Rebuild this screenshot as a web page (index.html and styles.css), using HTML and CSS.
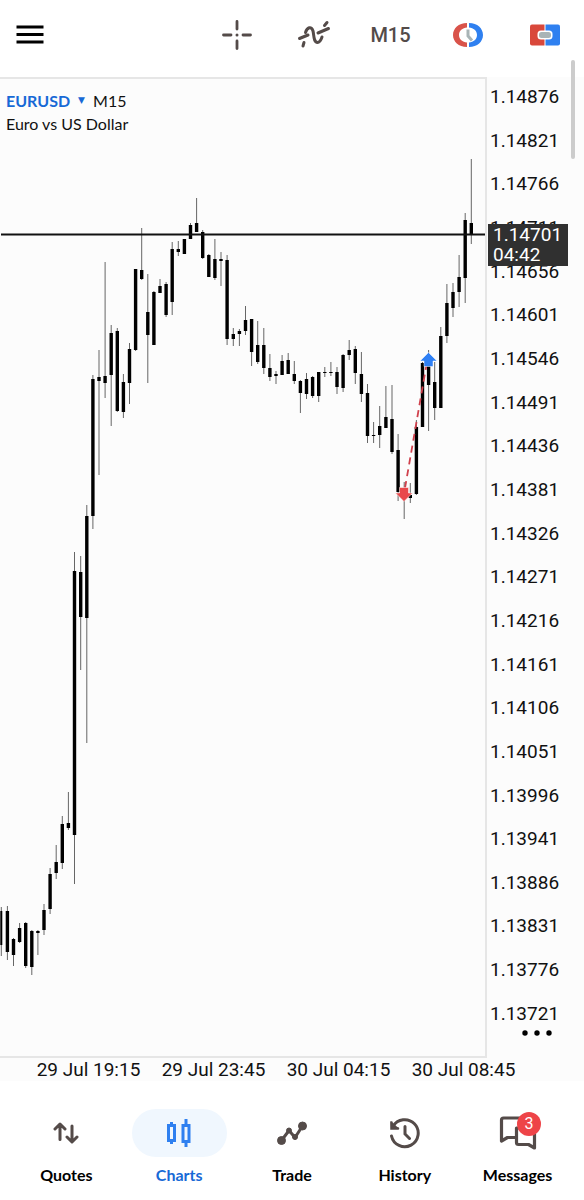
FILE: index.html
```html
<!DOCTYPE html>
<html lang="en">
  <head>
    <meta charset="UTF-8" />
    <meta name="viewport" content="width=device-width, initial-scale=1.0" />
    <link rel="stylesheet" href="styles.css">
    <title>EURUSD M15</title>
  </head>
  <body>
    <!-- top bar -->
    <header class="toolbar">
      <button class="menu-btn" aria-label="Menu">
        <svg width="28" height="20" viewBox="0 0 28 20">
          <path d="M0.5 2H27.500M0.5 9.500H27.500M0.5 17H27.500" stroke="#000" stroke-width="3" />
        </svg>
      </button>
      <div class="tools">
        <button class="tool-btn" aria-label="Crosshair">
          <svg width="32" height="32" viewBox="0 0 32 32" stroke="#544b49" stroke-width="2.800" stroke-linecap="round">
            <path d="M16 2.500V10M16 22V29.500M2.500 16H10M22 16H29.500" />
            <circle cx="16" cy="16" r="1.500" fill="#544b49" stroke="none" />
          </svg>
        </button>
        <button class="tool-btn" aria-label="Indicators">
          <svg width="34" height="30" viewBox="0 0 34 30" fill="none" stroke="#544b49" stroke-width="3" stroke-linecap="round">
            <path d="M2.500 18.500L11 15M8.500 12.500C10 7.500 14.500 5.500 16 11C17 15 16.500 22.500 20.500 22.500C23 22.500 24 20 25 17M21 13L31.500 8.500M27.500 5.500L30 2.500M6 26L7 22.500" />
          </svg>
        </button>
        <button class="tool-btn">M15</button>
        <button class="tool-btn" aria-label="One click trading">
          <svg width="32" height="28" viewBox="0 0 32 28" fill="none">
            <path d="M15 2C6.500 2 1 7.500 1 14S6.500 26 15 26V21.500C10.500 21 7 18.500 7 14S10.500 7 15 6.500Z" fill="#d9534a" />
            <path d="M17 2C25.500 2 31 7.500 31 14S25.500 26 17 26V21.500C21.500 21 25 18.500 25 14S21.500 7 17 6.500Z" fill="#2f80f0" />
            <path d="M16 8.500V15L20 19.500" stroke="#a9b4b6" stroke-width="3" />
          </svg>
        </button>
        <button class="tool-btn" aria-label="New order">
          <svg width="30" height="22" viewBox="0 0 30 22">
            <path d="M2 0.500H14.500V21.500H2Q0 21.500 0 19.500V2.500Q0 0.500 2 0.500Z" fill="#d9483b" />
            <path d="M15.500 0.500H28Q30 0.500 30 2.500V19.500Q30 21.500 28 21.500H15.500Z" fill="#2f80f0" />
            <rect x="7.500" y="6.500" width="15" height="9" rx="3.500" fill="#fff" />
            <rect x="9" y="8" width="12" height="6" rx="2.500" fill="#a9b4b6" />
          </svg>
        </button>
      </div>
    </header>

    <!-- chart -->
    <main class="chart">
      <div class="plot">
        <div class="plot-title">
          <div class="symbol-row">
            <button class="symbol-btn">EURUSD <span class="arrow">▼</span></button>
            <span>M15</span>
          </div>
          <div>Euro vs US Dollar</div>
        </div>
        <svg class="candles" viewBox="0 79 485 977">
          <g id="candles"></g>
          <path d="M1 234.500H485" stroke="#111" stroke-width="2" />
          <path d="M405 488L428 356" stroke="#d0404c" stroke-width="1.800" stroke-dasharray="7 5" />
          <path d="M428.500 352.500L437 361H433V366.500H424V361H420Z" fill="#2f80f5" stroke="#fff" stroke-width="0.500" />
          <path d="M404 501.500L412.500 493H408.500V487.500H399.500V493H395.500Z" fill="#e8484b" stroke="#fff" stroke-width="0.500" />
        </svg>
      </div>
      <div class="price-axis">
        <span>1.14876</span>
        <span>1.14821</span>
        <span>1.14766</span>
        <span>1.14711</span>
        <span>1.14656</span>
        <span>1.14601</span>
        <span>1.14546</span>
        <span>1.14491</span>
        <span>1.14436</span>
        <span>1.14381</span>
        <span>1.14326</span>
        <span>1.14271</span>
        <span>1.14216</span>
        <span>1.14161</span>
        <span>1.14106</span>
        <span>1.14051</span>
        <span>1.13996</span>
        <span>1.13941</span>
        <span>1.13886</span>
        <span>1.13831</span>
        <span>1.13776</span>
        <span>1.13721</span>
        <button class="more-btn" aria-label="More">
          <svg width="30" height="6" viewBox="0 0 30 6">
            <circle cx="3" cy="3" r="2.700" />
            <circle cx="15" cy="3" r="2.700" />
            <circle cx="27" cy="3" r="2.700" />
          </svg>
        </button>
        <div class="current-price">
          <div>1.14701</div>
          <div>04:42</div>
        </div>
      </div>
      <div class="time-axis">
        <span>29 Jul 19:15</span>
        <span>29 Jul 23:45</span>
        <span>30 Jul 04:15</span>
        <span>30 Jul 08:45</span>
      </div>
    </main>
    <div class="scroll-thumb"></div>

    <!-- bottom tabs -->
    <nav class="tabs">
      <a class="tab" href="#quotes">
        <span class="tab-icon">
          <svg width="26" height="24" viewBox="0 0 26 24" fill="none" stroke="#544b49" stroke-width="3" stroke-linecap="round" stroke-linejoin="round">
            <path d="M7 18.500V3.500M2 8L7 3L12 8M19 5V20M14 16L19 21L24 16" />
          </svg>
        </span>
        Quotes
      </a>
      <a class="tab active" href="#charts">
        <span class="tab-icon">
          <svg width="26" height="30" viewBox="0 0 26 30" fill="none" stroke="#2f80f0" stroke-width="3">
            <path d="M2.500 7.500H8.500V22.500H2.500ZM5.500 4V7M5.500 23V26M17 7.500H23V23.500H17ZM20 1V7M20 24V29" />
          </svg>
        </span>
        Charts
      </a>
      <a class="tab" href="#trade">
        <span class="tab-icon">
          <svg width="30" height="26" viewBox="0 0 30 26" fill="#544b49" stroke="#544b49">
            <path d="M4.500 20.500L12 10.500L18 17.500L25.500 6" fill="none" stroke-width="3" />
            <circle cx="4.500" cy="20.500" r="4" />
            <circle cx="12" cy="10.500" r="2.500" />
            <circle cx="18" cy="17" r="2.500" />
            <circle cx="25.500" cy="6" r="4" />
          </svg>
        </span>
        Trade
      </a>
      <a class="tab" href="#history">
        <span class="tab-icon">
          <svg width="32" height="32" viewBox="0 0 32 32" fill="none" stroke="#544b49" stroke-width="3" stroke-linecap="round">
            <path d="M4 9.500A13.500 13.500 0 1 1 2.500 19M16 9.500V17L20.500 21.500" />
            <path d="M1.500 4L2 11.500L9.500 11Z" fill="#544b49" stroke="none" />
            <path d="M2.500 5.500V11.500H9" stroke-width="2.500" />
          </svg>
        </span>
        History
      </a>
      <a class="tab" href="#messages">
        <span class="tab-icon">
          <svg width="38" height="34" viewBox="0 0 38 34" fill="none" stroke="#544b49" stroke-width="3.200" stroke-linejoin="round">
            <path d="M16 21.500H8.500L2.500 25V4Q2.500 2 4.500 2H26Q28 2 28 4V10" />
            <path d="M17.500 12H33.500Q35.500 12 35.500 14V32L29.500 28.500H19.500Q17.500 28.500 17.500 26.500Z" fill="#fff" />
          </svg>
          <span class="badge">3</span>
        </span>
        Messages
      </a>
    </nav>
    <script src="chart.js"></script>
  </body>
</html>
```

FILE: styles.css
```css
* {
  box-sizing: border-box;
}

body {
  margin: 0;
  background-color: #fff;
  color: #111;
  font-family: Lato, "Liberation Sans", sans-serif;
  font-size: 16px;
}

button {
  background: none;
  border: none;
  padding: 0;
  font: inherit;
  cursor: pointer;
}

svg {
  display: block;
}

.toolbar {
  display: flex;
  justify-content: space-between;
  align-items: center;
  height: 77px;
  padding: 0 1px 8px 16px;
}

.tools {
  display: flex;
}

.tool-btn {
  display: flex;
  justify-content: center;
  align-items: center;
  width: 77px;
  height: 48px;
  color: #544b49;
  font-family: Roboto, sans-serif;
  font-size: 20px;
  font-weight: 500;
}

/* plot and the two axes */
.chart {
  display: grid;
  grid-template-columns: 1fr 97px;
  background-color: #fcfcfc;
}

.plot {
  position: relative;
  border: 2px solid #e6e6e6;
  border-left: none;
}

.candles {
  width: 100%;
}

.plot-title {
  position: absolute;
  top: 10px;
  left: 6px;
  line-height: 23px;
}

.symbol-row {
  display: flex;
  gap: 8px;
}

.symbol-btn {
  display: flex;
  gap: 8px;
  color: #1769d6;
  font-weight: bold;
}

.arrow {
  font-family: "DejaVu Sans", sans-serif;
  font-size: 9px;
}

.price-axis {
  position: relative;
  display: flex;
  flex-direction: column;
  justify-content: space-between;
  padding: 9px 0 33px 3px;
  font-family: Roboto, sans-serif;
  font-size: 19px;
  line-height: 22px;
}

.more-btn {
  position: absolute;
  right: 32px;
  bottom: 22px;
}

.current-price {
  position: absolute;
  top: 15%;
  left: 1px;
  width: 80px;
  padding: 1px 5px;
  background-color: #303030;
  color: #fff;
  line-height: 20px;
}

.time-axis {
  grid-column: 1 / 3;
  display: grid;
  grid-template-columns: repeat(4, 1fr);
  padding: 0 58px 0 26px;
  font-family: Roboto, sans-serif;
  font-size: 19px;
  line-height: 23px;
  text-align: center;
}

.scroll-thumb {
  position: absolute;
  top: 60px;
  right: 9px;
  width: 4px;
  height: 99px;
  border-radius: 2px;
  background-color: #ccc;
}

/* bottom tabs */
.tabs {
  display: flex;
  padding: 28px 10px 14px;
}

.tab {
  display: flex;
  flex: 1;
  flex-direction: column;
  align-items: center;
  gap: 8px;
  color: #000;
  font-weight: bold;
  line-height: 20px;
  text-decoration: none;
}

.tab-icon {
  position: relative;
  display: flex;
  justify-content: center;
  align-items: center;
  width: 95px;
  height: 48px;
  border-radius: 24px;
}

.active {
  color: #1769d6;
}

.active .tab-icon {
  background-color: #f0f7fe;
}

.badge {
  position: absolute;
  top: 3px;
  right: 24px;
  width: 24px;
  height: 24px;
  border-radius: 50%;
  background-color: #ee4448;
  color: #fff;
  font-family: Roboto, sans-serif;
  font-size: 16px;
  font-weight: normal;
  line-height: 24px;
  text-align: center;
}
```

FILE: chart.js
```js
// high, body top, body bottom, low
const candles = [
  [907, 911, 945, 956], [906, 911, 952, 960], [938, 939, 955, 966],
  [923, 928, 942, 943], [922, 923, 966, 968], [930, 931, 967, 975],
  [930, 931, 933, 955], [904, 910, 930, 935], [868, 874, 909, 914],
  [845, 862, 873, 879], [816, 824, 863, 869], [792, 823, 828, 830],
  [552, 571, 835, 884], [556, 572, 617, 670], [505, 516, 618, 743],
  [375, 379, 516, 529], [350, 377, 381, 475], [262, 376, 383, 398],
  [325, 333, 375, 426], [328, 331, 411, 412], [374, 382, 412, 418],
  [343, 349, 383, 404], [269, 269, 350, 351], [228, 270, 279, 280],
  [274, 312, 335, 383], [291, 292, 345, 345], [279, 286, 293, 293],
  [282, 284, 315, 317], [242, 249, 302, 315], [241, 249, 252, 256],
  [239, 239, 254, 254], [223, 225, 239, 239], [198, 223, 232, 232],
  [230, 232, 258, 259], [254, 255, 277, 277], [239, 259, 278, 280],
  [252, 259, 261, 286], [255, 260, 339, 345], [328, 334, 339, 346],
  [329, 331, 334, 346], [306, 320, 331, 335], [319, 319, 352, 366],
  [321, 345, 362, 364], [328, 345, 368, 374], [354, 368, 377, 381],
  [371, 374, 376, 384], [355, 361, 375, 375], [353, 360, 374, 374],
  [361, 374, 381, 384], [380, 381, 393, 413], [373, 379, 394, 399],
  [376, 377, 396, 398], [372, 372, 396, 402], [367, 372, 373, 377],
  [362, 372, 373, 376], [367, 372, 387, 394], [354, 355, 388, 392],
  [340, 350, 355, 360], [346, 349, 373, 384], [352, 374, 394, 402],
  [384, 393, 436, 443], [422, 435, 436, 443], [406, 426, 435, 448],
  [386, 417, 428, 428], [385, 419, 452, 454], [434, 450, 492, 501],
  [482, 490, 496, 519], [483, 495, 498, 503], [420, 427, 494, 495],
  [362, 363, 427, 427], [350, 366, 385, 431], [362, 382, 408, 420],
  [327, 336, 408, 408], [284, 303, 336, 343], [283, 292, 308, 317],
  [255, 277, 292, 307], [213, 220, 278, 303], [159, 223, 235, 244],
];

const group = document.getElementById("candles");
const step = 6.104;

function drawLine(x, y1, y2, width, color) {
  const line = document.createElementNS("http://www.w3.org/2000/svg", "path");
  line.setAttribute("d", `M${x} ${y1}V${y2}`);
  line.setAttribute("stroke", color);
  line.setAttribute("stroke-width", width);
  group.appendChild(line);
}

candles.forEach(([high, top, bottom, low], i) => {
  const x = (1.3 + i * step).toFixed(1);
  drawLine(x, high, low, 1, "#666");
  // the first candle is cut off by the left edge
  drawLine(x, top, bottom, i === 0 ? 2 : 3.4, "#000");
});
```
